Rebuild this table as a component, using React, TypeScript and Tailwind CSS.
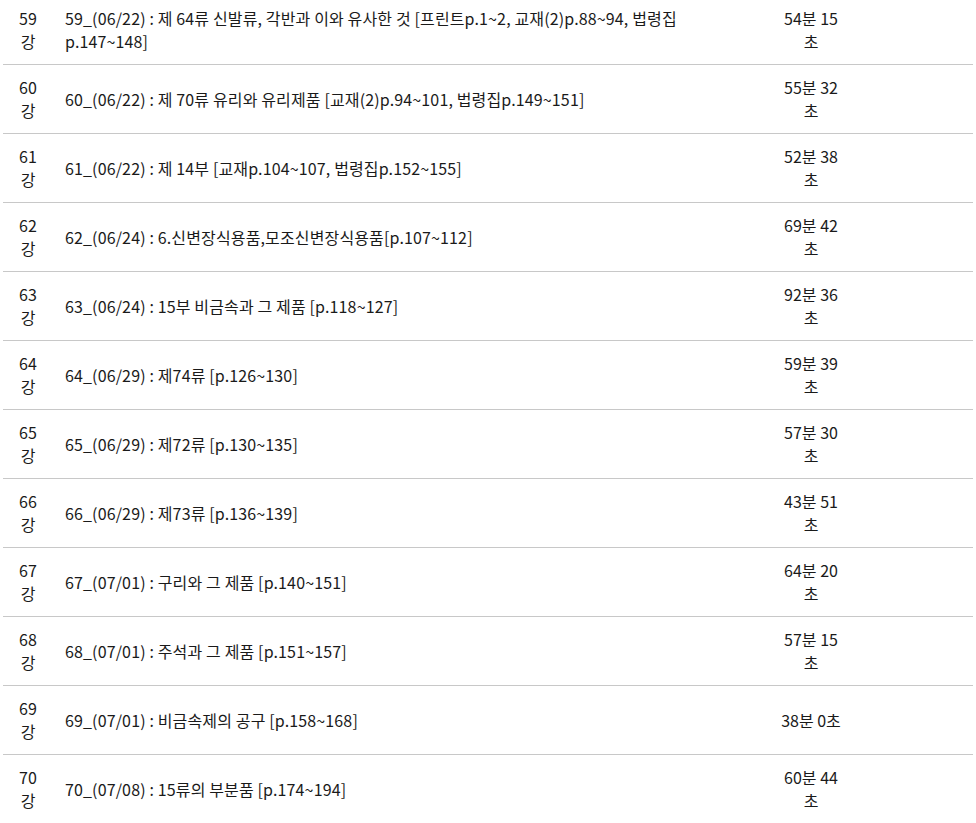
const lectures = [
  { no: 59, title: "59_(06/22) : 제 64류 신발류, 각반과 이와 유사한 것 [프린트p.1~2, 교재(2)p.88~94, 법령집p.147~148]", time: "54분 15초" },
  { no: 60, title: "60_(06/22) : 제 70류 유리와 유리제품 [교재(2)p.94~101, 법령집p.149~151]", time: "55분 32초" },
  { no: 61, title: "61_(06/22) : 제 14부 [교재p.104~107, 법령집p.152~155]", time: "52분 38초" },
  { no: 62, title: "62_(06/24) : 6.신변장식용품,모조신변장식용품[p.107~112]", time: "69분 42초" },
  { no: 63, title: "63_(06/24) : 15부 비금속과 그 제품 [p.118~127]", time: "92분 36초" },
  { no: 64, title: "64_(06/29) : 제74류 [p.126~130]", time: "59분 39초" },
  { no: 65, title: "65_(06/29) : 제72류 [p.130~135]", time: "57분 30초" },
  { no: 66, title: "66_(06/29) : 제73류 [p.136~139]", time: "43분 51초" },
  { no: 67, title: "67_(07/01) : 구리와 그 제품 [p.140~151]", time: "64분 20초" },
  { no: 68, title: "68_(07/01) : 주석과 그 제품 [p.151~157]", time: "57분 15초" },
  { no: 69, title: "69_(07/01) : 비금속제의 공구 [p.158~168]", time: "38분 0초" },
  { no: 70, title: "70_(07/08) : 15류의 부분품 [p.174~194]", time: "60분 44초" },
];

const LectureRow = ({ no, title, time }: { no: number; title: string; time: string }) => {
  return (
    <div className="grid grid-cols-[50px_704px_108px_1fr] items-center border-b border-[#c8c8c8] py-[11px]">
      <div className="px-[15px] text-center">
        {no}강
      </div>
      <div className="pl-[12px] pr-[12px] tracking-[0.14px]">{title}</div>
      <div className="px-[21px] text-center">{time}</div>
      <div></div>
    </div>
  );
};

export default function App() {
  return (
    <div
      className="bg-white min-h-screen overflow-hidden text-[16px] leading-[23px] text-[#1a1a1a]"
      style={{ fontFamily: '"Noto Sans CJK KR", "Noto Sans", sans-serif' }}
    >
      <div className="-mt-[4px] ml-[3px] w-[970px]">
        {lectures.map((l) => (
          <LectureRow key={l.no} {...l} />
        ))}
      </div>
    </div>
  );
}
